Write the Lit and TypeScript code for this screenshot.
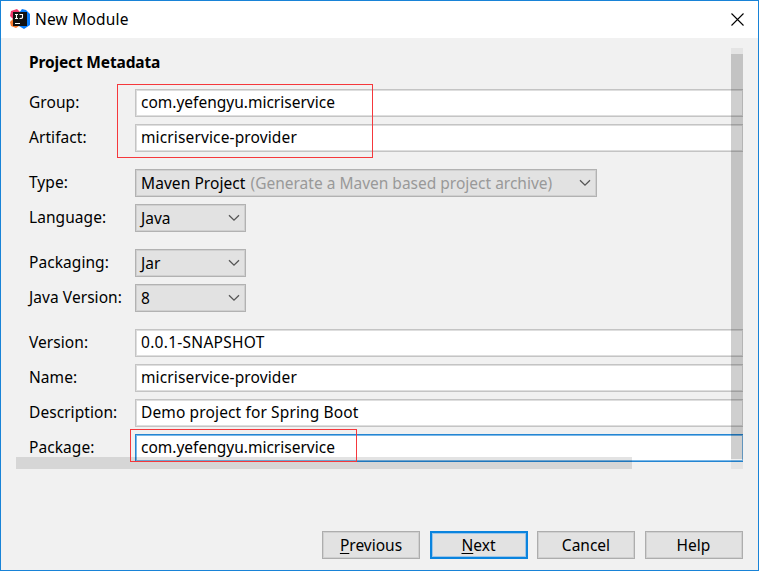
import { LitElement, html, css, nothing } from "lit";
import { customElement } from "lit/decorators.js";

interface Field {
  label: string;
  value: string;
  kind: "text" | "select";
  hint?: string;
  wide?: boolean;
  focused?: boolean;
  tracking?: string;
}

const GROUPS: Field[][] = [
  [
    { label: "Group:", value: "com.yefengyu.micriservice", kind: "text" },
    { label: "Artifact:", value: "micriservice-provider", kind: "text", tracking: "loose" },
  ],
  [
    { label: "Type:", value: "Maven Project", kind: "select", hint: "(Generate a Maven based project archive)", wide: true },
    { label: "Language:", value: "Java", kind: "select" },
  ],
  [
    { label: "Packaging:", value: "Jar", kind: "select" },
    { label: "Java Version:", value: "8", kind: "select" },
  ],
  [
    { label: "Version:", value: "0.0.1-SNAPSHOT", kind: "text", tracking: "looser" },
    { label: "Name:", value: "micriservice-provider", kind: "text", tracking: "loose" },
    { label: "Description:", value: "Demo project for Spring Boot", kind: "text", tracking: "loose" },
    { label: "Package:", value: "com.yefengyu.micriservice", kind: "text", focused: true },
  ],
];

@customElement("app-root")
export class AppRoot extends LitElement {
  static styles = css`
    :host {
      display: block;
      width: 759px;
      height: 571px;
      font: 15.5px/20px "Noto Sans", "Open Sans", sans-serif;
      color: #000;
    }
    * { box-sizing: border-box; }
    .window {
      position: relative;
      display: flex;
      flex-direction: column;
      height: 571px;
      border: 1px solid #1883d7;
      background: #f1f1f1;
      overflow: hidden;
      white-space: nowrap;
    }
    .titlebar {
      display: flex;
      align-items: center;
      height: 37px;
      flex: none;
      padding: 0 14px 1px 9px;
      background: #fff;
    }
    .titlebar .name { flex: 1; margin-left: 5px; letter-spacing: 0.2px; }
    .titlebar svg { display: block; }
    .pane {
      position: relative;
      width: 727px;
      height: 421px;
      margin: 10px 0 0 15px;
      padding-left: 13px;
      overflow: hidden;
      flex: none;
    }
    h1 {
      margin: 4px 0 17px;
      font-size: 15.5px;
      line-height: 20px;
      font-weight: 700;
      letter-spacing: -0.15px;
    }
    .group { display: grid; gap: 7px; margin-bottom: 17px; }
    .row { display: grid; grid-template-columns: 106px 1fr; height: 28px; }
    .label { line-height: 27px; letter-spacing: 0.06px; }
    .text {
      border: 1px solid #c4c4c4;
      box-shadow: inset 0 0 0 1px #dedede;
      border-right: 0;
      background: #fff;
      padding-left: 5px;
      line-height: 24px;
    }
    .text.focused { border-color: #2585d2; box-shadow: inset 0 0 0 1px #7ab8e8; }
    .loose { letter-spacing: 0.13px; }
    .looser { letter-spacing: 0.28px; }
    .select {
      display: flex;
      align-items: center;
      width: 111px;
      padding: 0 5px;
      border: 1px solid #b2b2b2;
      box-shadow: inset 0 0 0 1px #d0d0d0;
      background: #e2e2e2;
    }
    .select.wide { width: 462px; }
    .select.wide span:first-child { letter-spacing: 0.07px; }
    .select svg { margin-left: auto; flex: none; }
    .hint { color: #999; margin-left: 5px; }
    .vbar, .vthumb, .hthumb { position: absolute; }
    .vbar { right: 0; top: 0; width: 12px; height: 421px; background: rgba(0, 0, 0, 0.05); }
    .vthumb { right: 0; top: 6px; width: 12px; height: 405px; background: rgba(0, 0, 0, 0.14); }
    .hthumb { left: 0; bottom: 0; width: 616px; height: 12px; background: rgba(0, 0, 0, 0.11); }
    .mark { position: absolute; border: 1px solid #f5383c; }
    .mark.top { left: 116px; top: 83px; width: 256px; height: 74px; }
    .mark.bottom { left: 129px; top: 428px; width: 227px; height: 33px; }
    .actions {
      display: flex;
      justify-content: flex-end;
      gap: 9.5px;
      margin: 62px 15.5px 0 0;
    }
    .button {
      width: 98px;
      height: 28px;
      border: 1px solid #adadad;
      box-shadow: inset 0 0 0 1px #d0d0d0;
      background: #e2e2e2;
      text-align: center;
      line-height: 27px;
    }
    .button.primary { border: 2px solid #0a84de; box-shadow: inset 0 0 0 1px #9cc5e8; line-height: 25px; }
    u { text-underline-offset: 2px; text-decoration-thickness: 1px; }
  `;

  private field(f: Field) {
    return html`<div class="row">
      <div class="label">${f.label}</div>
      ${f.kind === "text"
        ? html`<div class="text ${f.focused ? "focused" : ""}"><span class=${f.tracking ?? ""}>${f.value}</span></div>`
        : html`<div class="select ${f.wide ? "wide" : ""}">
            <span>${f.value}</span>${f.hint ? html`<span class="hint">${f.hint}</span>` : nothing}
            <svg width="12" height="8" viewBox="0 0 12 8"><path d="M1 1.2 6 6.2 11 1.2" fill="none" stroke="#555" stroke-width="1.3" /></svg>
          </div>`}
    </div>`;
  }

  render() {
    return html`<div class="window">
      <div class="titlebar">
        <svg width="20" height="20" viewBox="0 0 20 20">
          <path d="M1 2 7 0 11 4 8 12 3 15 1 13 3 10 0 7Z" fill="#f1376c" />
          <path d="M0 13 4 9 9 17 6 19 1 17Z" fill="#f97a2d" />
          <path d="M9 4 12 0 16 1 20 5V16L14 20 9 17Z" fill="#087cfa" />
          <path d="M3 3H17V17H3Z" fill="#111" />
          <path d="M5 5.5H8M6.5 5V9.5M5 9.5H8M9.5 5.5H12.5V8.5Q12.500 9.5 9.5 9.5M5 14.5H10" fill="none" stroke="#fff" stroke-width="1.1" />
        </svg>
        <span class="name">New Module</span>
        <svg width="13" height="13" viewBox="0 0 13 13"><path d="M.5.5 12.5 12.5M12.5.5.5 12.5" stroke="#000" stroke-width="1.1" /></svg>
      </div>
      <div class="pane">
        <h1>Project Metadata</h1>
        ${GROUPS.map((g) => html`<div class="group">${g.map((f) => this.field(f))}</div>`)}
        <div class="vbar"></div>
        <div class="vthumb"></div>
        <div class="hthumb"></div>
      </div>
      <div class="actions">
        <div class="button"><u>P</u>revious</div>
        <div class="button primary"><u>N</u>ext</div>
        <div class="button">Cancel</div>
        <div class="button">Help</div>
      </div>
      <div class="mark top"></div>
      <div class="mark bottom"></div>
    </div>`;
  }
}
